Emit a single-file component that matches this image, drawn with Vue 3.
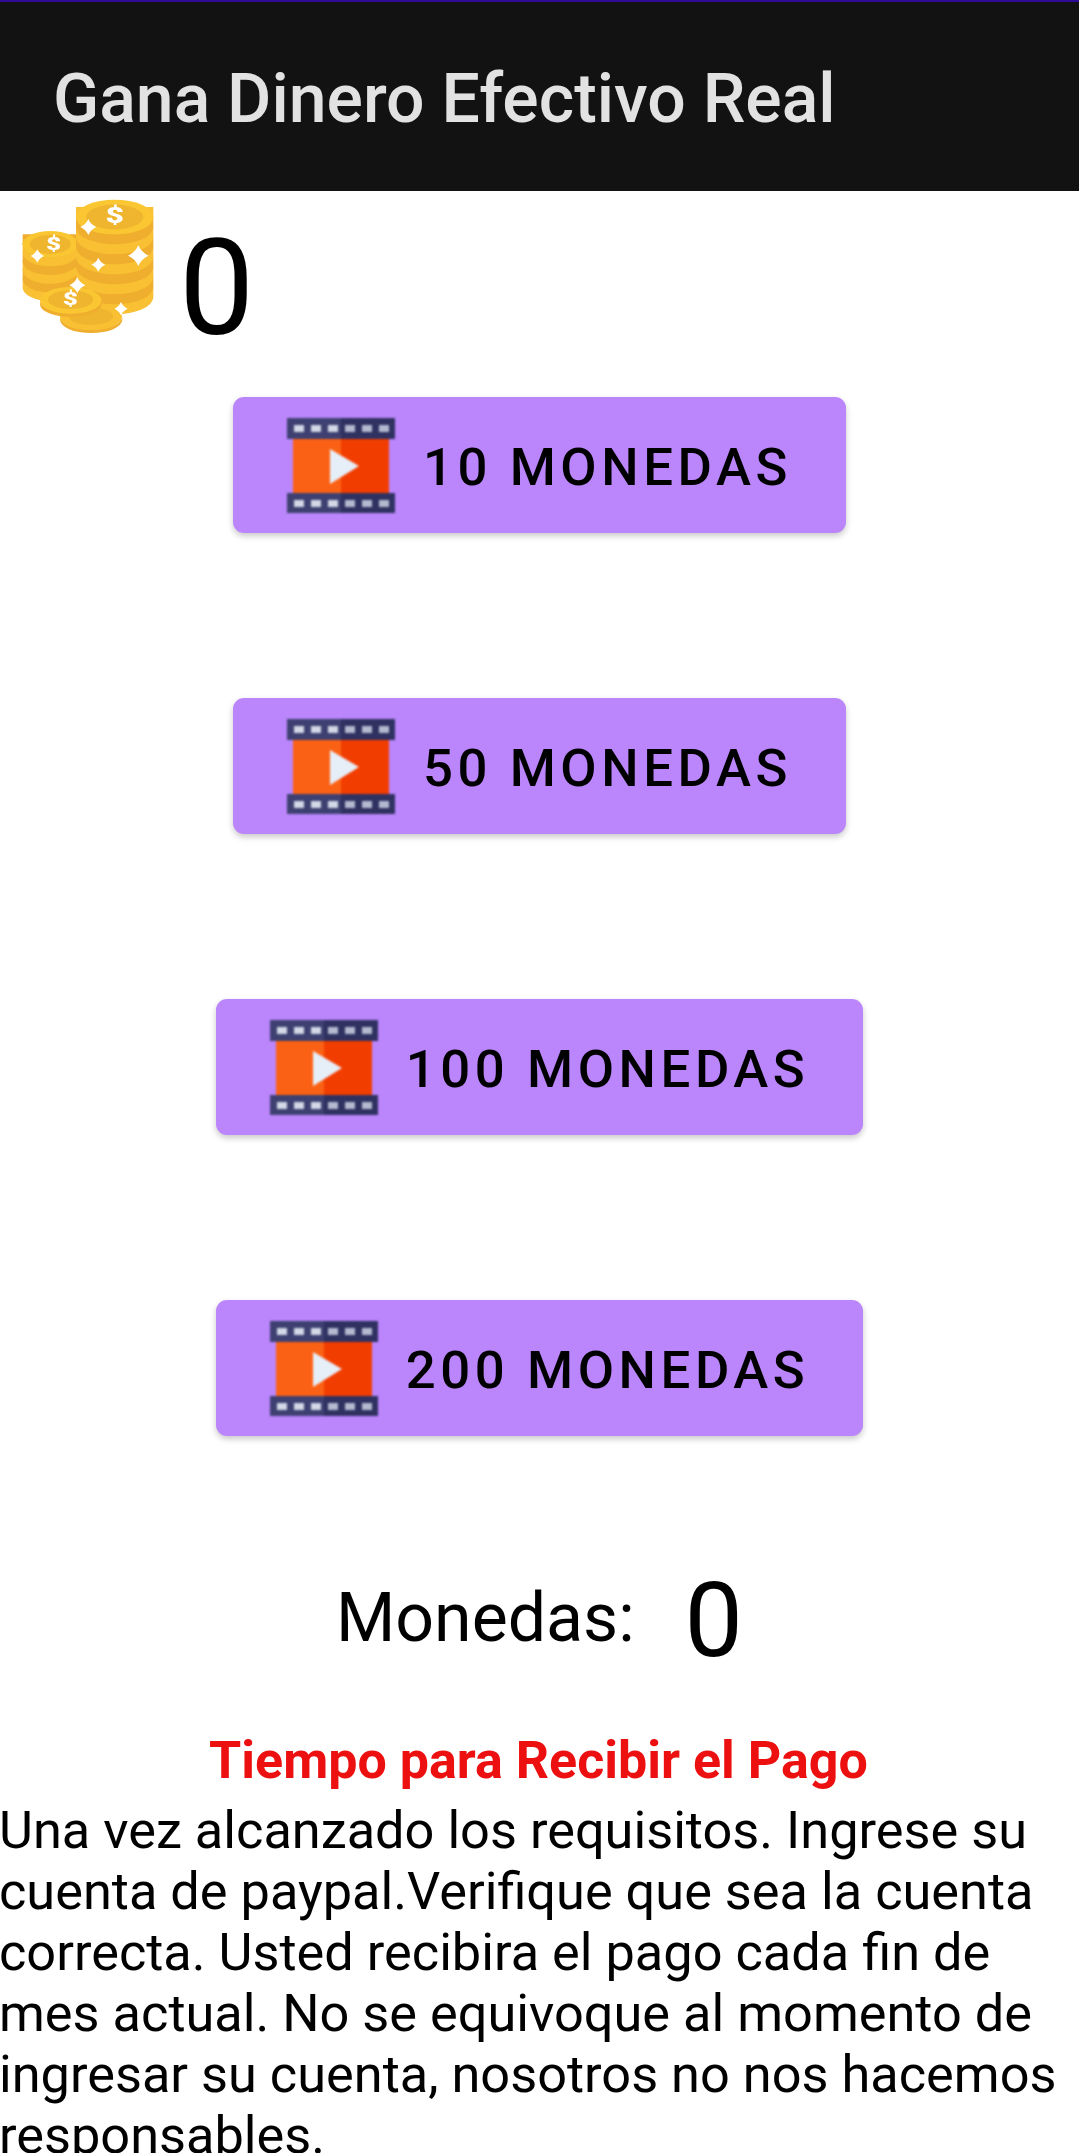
<template>
  <div class="screen">
    <header class="app-bar">
      <h1>Gana Dinero Efectivo Real</h1>
    </header>

    <div class="balance">
      <svg class="coins" viewBox="60 590 405 420" width="135" height="140">
        <g v-for="stack in stacks" :key="stack.id">
          <path
            v-for="(cy, i) in stack.layers"
            :key="i"
            :d="side(stack, cy)"
            :fill="i % 2 ? '#efae2d' : '#f8c032'"
          />
          <ellipse :cx="stack.cx" :cy="stack.top" :rx="stack.rx" :ry="stack.ry" fill="#fac733" />
          <ellipse :cx="stack.cx" :cy="stack.top" :rx="stack.rx * 0.74" :ry="stack.ry * 0.72" fill="#f0b52f" />
        </g>
        <path d="M180 950a93 38 0 0 0 187 0v8a93 40 0 0 1-187 0z" fill="#efae2d" />
        <ellipse cx="273" cy="950" rx="93" ry="40" fill="#f8c032" />
        <ellipse cx="273" cy="948" rx="66" ry="26" fill="#f0b52f" />
        <path d="M120 900a92 38 0 0 0 185 0v12a92 38 0 0 1-185 0z" fill="#efae2d" />
        <ellipse cx="212" cy="900" rx="92" ry="40" fill="#fac733" />
        <ellipse cx="212" cy="898" rx="68" ry="28" fill="#f0b52f" />
        <text transform="translate(344 669) scale(1.45 1)" class="dollar big">$</text>
        <text transform="translate(161 749) scale(1.45 1)" class="dollar mid">$</text>
        <text transform="translate(211 914) scale(1.45 1)" class="dollar mid">$</text>
        <path v-for="s in sparkles" :key="s.x" :d="sparkle(s)" fill="#fff" />
      </svg>
      <span class="balance-value">0</span>
    </div>

    <div class="rewards">
      <button v-for="amount in amounts" :key="amount" class="reward-btn" type="button">
        <svg class="film" viewBox="0 0 108 95" width="108" height="95">
          <rect x="6" y="20" width="48" height="56" fill="#fb6114" />
          <rect x="54" y="20" width="48" height="56" fill="#f23d00" />
          <rect y="0" width="54" height="21" fill="#3d4070" />
          <rect x="54" y="0" width="54" height="21" fill="#2f3160" />
          <rect y="75" width="54" height="20" fill="#3d4070" />
          <rect x="54" y="75" width="54" height="20" fill="#2f3160" />
          <g v-for="x in [7, 24, 41, 58, 75, 92]" :key="x">
            <rect :x="x" y="7" width="10" height="7" :fill="x < 54 ? '#d2d8e6' : '#b4b9d0'" />
            <rect :x="x" y="82" width="10" height="7" :fill="x < 54 ? '#d2d8e6' : '#b4b9d0'" />
          </g>
          <path d="M43 31 72 48 43 66z" fill="#e6eef8" />
        </svg>
        <span class="reward-label">{{ amount }} MONEDAS</span>
      </button>
    </div>

    <div class="total">
      <span class="total-label">Monedas:</span>
      <span class="total-value">0</span>
    </div>

    <h2 class="notice-title">Tiempo para Recibir el Pago</h2>
    <p class="notice-text">
      Una vez alcanzado los requisitos. Ingrese su cuenta de paypal.Verifique que sea la cuenta correcta. Usted recibira el pago cada fin de mes actual. No se equivoque al momento de ingresar su cuenta, nosotros no nos hacemos responsables.
    </p>
  </div>
</template>

<script setup>
const amounts = [10, 50, 100, 200]

const range = (start, step, count) => Array.from({ length: count }, (_, i) => start + i * step)

const stacks = [
  { id: 'small', cx: 151, rx: 83, ry: 40, top: 732, layers: range(862, -26, 6) },
  { id: 'big', cx: 344, rx: 116, ry: 52, top: 650, layers: range(890, -30, 9) }
]

const sparkles = [
  { x: 265, y: 680, r: 24 },
  { x: 415, y: 766, r: 31 },
  { x: 295, y: 793, r: 21 },
  { x: 112, y: 767, r: 20 },
  { x: 232, y: 855, r: 24 },
  { x: 363, y: 925, r: 20 }
]

const side = (s, cy) =>
  `M${s.cx - s.rx} ${cy - 30}v30a${s.rx} ${s.ry} 0 0 0 ${s.rx * 2} 0v-30z`

const sparkle = ({ x, y, r }) => {
  const k = r * 0.3
  return `M${x} ${y - r}Q${x + k} ${y - k} ${x + r} ${y}Q${x + k} ${y + k} ${x} ${y + r}Q${x - k} ${y + k} ${x - r} ${y}Q${x - k} ${y - k} ${x} ${y - r}z`
}
</script>

<style scoped>
.screen {
  height: 2153px;
  overflow: hidden;
  background: #fff;
  color: #000;
  font-family: Roboto, "Liberation Sans", sans-serif;
}

.app-bar {
  height: 184px;
  border-top: 2px solid #2f0a96;
  background: #121212;
  display: flex;
  align-items: center;
  padding: 5px 0 0 53px;
}

.app-bar h1 {
  margin: 0;
  font-size: 67.9px;
  font-weight: 500;
  color: #e2e2e2;
}

.balance {
  height: 206px;
  display: flex;
  align-items: flex-start;
  padding-left: 20px;
}

.coins {
  margin-top: 6px;
  flex-shrink: 0;
  filter: blur(0.4px);
}

.dollar {
  font-family: Roboto, sans-serif;
  font-weight: 900;
  fill: #fff;
  text-anchor: middle;
}

.dollar.big {
  font-size: 66px;
}

.dollar.mid {
  font-size: 54px;
}

.balance-value {
  margin-left: 24px;
  margin-top: 19px;
  font-size: 134px;
  line-height: 157px;
}

.rewards {
  display: flex;
  flex-direction: column;
  align-items: center;
  gap: 165px;
}

.reward-btn {
  height: 136px;
  display: flex;
  align-items: center;
  gap: 28px;
  padding: 0 54px;
  border: none;
  border-radius: 11px;
  background: #bb86fc;
  box-shadow: 0 3px 6px rgba(0, 0, 0, 0.22);
  color: #000;
  font-family: inherit;
  font-size: 52.7px;
  font-weight: 500;
  letter-spacing: 4.6px;
}

.reward-label {
  margin-top: 3px;
}

.film {
  flex-shrink: 0;
  filter: blur(0.9px);
}

.total {
  margin-top: 118px;
  display: flex;
  justify-content: center;
  align-items: center;
  gap: 50px;
}

.total-label {
  font-size: 68px;
}

.total-value {
  margin-top: 6px;
  font-size: 104px;
  line-height: 122px;
}

.notice-title {
  margin: 48px 0 0;
  text-align: center;
  font-size: 52px;
  font-weight: 700;
  color: #ec1010;
  line-height: 61px;
  text-indent: -2px;
}

.notice-text {
  margin: 9px 0 0 -1px;
  font-size: 52.3px;
  line-height: 61px;
}
</style>
